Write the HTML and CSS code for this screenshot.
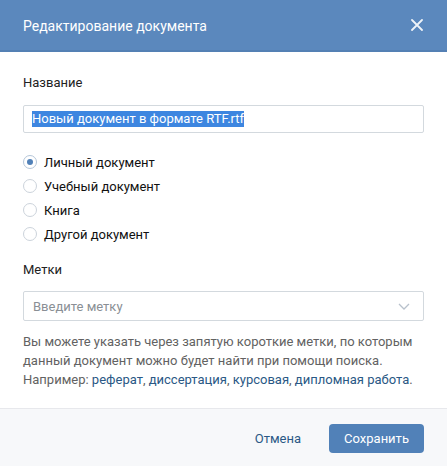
FILE: index.html
```html
<!DOCTYPE html>
<html lang="ru">
<head>
<meta charset="utf-8">
<link rel="stylesheet" href="styles.css">
</head>
<body>
<div class="modal">
  <div class="header">
    <div class="title">Редактирование документа</div>
    <svg class="close" width="12" height="12" viewBox="0 0 12 12"><path d="M1 1L11 11M11 1L1 11" stroke="#fff" stroke-width="1.8" stroke-linecap="round" fill="none"/></svg>
  </div>
  <div class="content">
    <div class="label">Название</div>
    <div class="field name-field"><span class="sel">Новый документ в формате RTF.rtf</span></div>
    <div class="radios">
      <div class="radio-row"><span class="radio checked"></span><span>Личный документ</span></div>
      <div class="radio-row"><span class="radio"></span><span>Учебный документ</span></div>
      <div class="radio-row"><span class="radio"></span><span>Книга</span></div>
      <div class="radio-row"><span class="radio"></span><span>Другой документ</span></div>
    </div>
    <div class="label tags-label">Метки</div>
    <div class="field tag-field">
      <span class="placeholder">Введите метку</span>
      <svg class="chevron" width="12" height="7" viewBox="0 0 12 7"><path d="M1 1L6 6L11 1" stroke="#b8c1cc" stroke-width="1.3" fill="none"/></svg>
    </div>
    <p class="help">Вы можете указать через запятую короткие метки, по которым данный документ можно будет найти при помощи поиска. Например: <span class="link">реферат</span>, <span class="link">диссертация</span>, <span class="link">курсовая</span>, <span class="link">дипломная работа</span>.</p>
  </div>
  <div class="footer">
    <button class="btn cancel">Отмена</button>
    <button class="btn save">Сохранить</button>
  </div>
</div>
</body>
</html>
```

FILE: styles.css
```css
html, body {
  margin: 0;
  padding: 0;
  background: #fff;
}
body {
  font-family: Roboto, "Open Sans", Arial, sans-serif;
  font-size: 13px;
  color: #000;
}
.modal {
  width: 447px;
  min-height: 466px;
  display: flex;
  flex-direction: column;
}
.header {
  height: 50px;
  background: #5b88bd;
  border-bottom: 2px solid #5480b4;
  display: flex;
  align-items: center;
  justify-content: space-between;
  padding: 0 24px 0 23px;
}
.title {
  color: #fff;
  font-size: 14px;
  padding-top: 1px;
}
.close {
  display: block;
  opacity: 0.9;
}
.content {
  padding: 23px 23px 0 23px;
}
.label {
  line-height: 16px;
  color: #222;
  margin-bottom: 14px;
}
.field {
  box-sizing: border-box;
  border: 1px solid #d3d9de;
  border-radius: 2px;
  display: flex;
  align-items: center;
}
.name-field {
  height: 28px;
  padding: 0 8px;
}
.sel {
  background: #3d86e0;
  color: #fff;
  line-height: 16px;
}
.radios {
  margin-top: 17px;
  display: flex;
  flex-direction: column;
}
.radio-row {
  height: 24px;
  display: flex;
  align-items: center;
  gap: 7px;
  color: #111;
}
.radio {
  box-sizing: border-box;
  width: 14px;
  height: 14px;
  border: 1px solid #ccd3db;
  border-radius: 50%;
  display: flex;
  align-items: center;
  justify-content: center;
}
.radio.checked {
  border-color: #b5c6d9;
}
.radio.checked::after {
  content: "";
  width: 6px;
  height: 6px;
  border-radius: 50%;
  background: #5181b8;
}
.tags-label {
  margin-top: 16px;
  margin-bottom: 13px;
}
.tag-field {
  height: 30px;
  padding: 0 13px 0 9px;
  justify-content: space-between;
}
.placeholder {
  color: #8a8f95;
}
.chevron {
  display: block;
}
.help {
  margin: 11px 0 19px 0;
  line-height: 19px;
  color: #626262;
}
.link {
  color: #2a5885;
}
.footer {
  flex: 1;
  background: #f7f8fa;
  border-top: 1px solid #e7e8ec;
  display: flex;
  justify-content: flex-end;
  align-items: flex-start;
  padding: 15px 23px 0 0;
  gap: 12px;
}
.btn {
  font-family: inherit;
  font-size: 13px;
  height: 29px;
  border: none;
  border-radius: 4px;
  cursor: pointer;
}
.cancel {
  background: transparent;
  color: #2a5885;
  padding: 0 16px;
}
.save {
  background: #5181b8;
  color: #fff;
  width: 95px;
  padding: 0;
}
```
